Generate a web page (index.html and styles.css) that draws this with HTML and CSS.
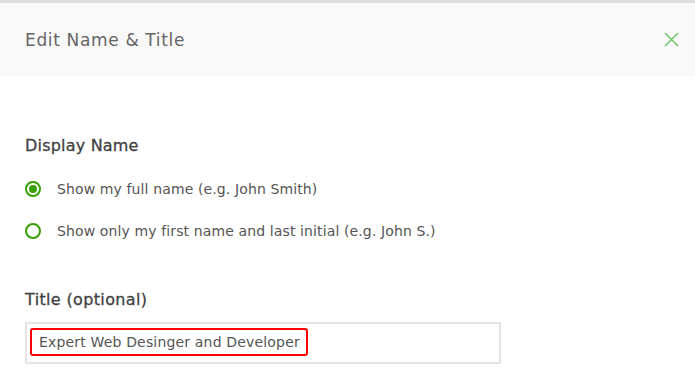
FILE: index.html
```html
<!DOCTYPE html>
<html>
<head>
<meta charset="utf-8">
<link rel="stylesheet" href="styles.css">
</head>
<body>
<div class="modal">
  <div class="header">
    <h2 class="title">Edit Name &amp; Title</h2>
    <button class="close" aria-label="Close">
      <svg width="15" height="15" viewBox="0 0 15 15"><path d="M1 1 L14 14 M14 1 L1 14" stroke="#74c36f" stroke-width="1.5" fill="none"/></svg>
    </button>
  </div>
  <div class="body">
    <div class="label">Display Name</div>
    <div class="options">
      <label class="option"><span class="radio checked"></span><span>Show my full name (e.g. John Smith)</span></label>
      <label class="option"><span class="radio"></span><span>Show only my first name and last initial (e.g. John S.)</span></label>
    </div>
    <div class="label label-title">Title (optional)</div>
    <div class="input">
      <span class="highlight">Expert Web Desinger and Developer</span>
    </div>
  </div>
</div>
</body>
</html>
```

FILE: styles.css
```css
* { box-sizing: border-box; }
html, body { margin: 0; padding: 0; background: #fff; }
body {
  font-family: "DejaVu Sans", "Liberation Sans", sans-serif;
  color: #555;
  width: 695px;
  height: 391px;
  overflow: hidden;
}
.modal { border-top: 3px solid #dedede; }
.header {
  background: #f8f8f8;
  height: 73px;
  display: flex;
  align-items: center;
  justify-content: space-between;
  padding: 0 16px 0 25px;
}
.title {
  margin: 0;
  font-size: 17px;
  font-weight: 400;
  color: #656565;
  letter-spacing: 0.65px;
}
.close {
  border: 0;
  background: transparent;
  padding: 0;
  width: 15px;
  height: 15px;
  display: flex;
}
.body { padding: 60px 25px 0 25px; }
.label {
  font-size: 16px;
  font-weight: 400;
  color: #3f3f3f;
  line-height: 20px;
  letter-spacing: 0.2px;
  -webkit-text-stroke: 0.3px #3f3f3f;
}
.label-title { letter-spacing: 0.35px; margin-top: 49px; }
.options {
  display: flex;
  flex-direction: column;
  gap: 22px;
  margin-top: 23px;
}
.option {
  display: flex;
  align-items: center;
  gap: 16px;
  font-size: 14px;
  line-height: 20px;
  color: #555;
  letter-spacing: 0.12px;
}
.radio {
  width: 16px;
  height: 16px;
  border-radius: 50%;
  border: 2px solid #37a000;
  flex: none;
  position: relative;
}
.radio.checked::after {
  content: "";
  position: absolute;
  left: 2px; top: 2px;
  width: 8px; height: 8px;
  border-radius: 50%;
  background: #37a000;
}
.input {
  margin-top: 12px;
  width: 476px;
  height: 42px;
  border: 2px solid #e4e4e4;
  padding: 4px 0 0 3px;
}
.highlight {
  display: inline-block;
  border: 2px solid #f00;
  border-radius: 3px;
  padding: 2px 6px 2px 7px;
  font-size: 14px;
  line-height: 20px;
  color: #555;
  letter-spacing: 0.17px;
}
```
